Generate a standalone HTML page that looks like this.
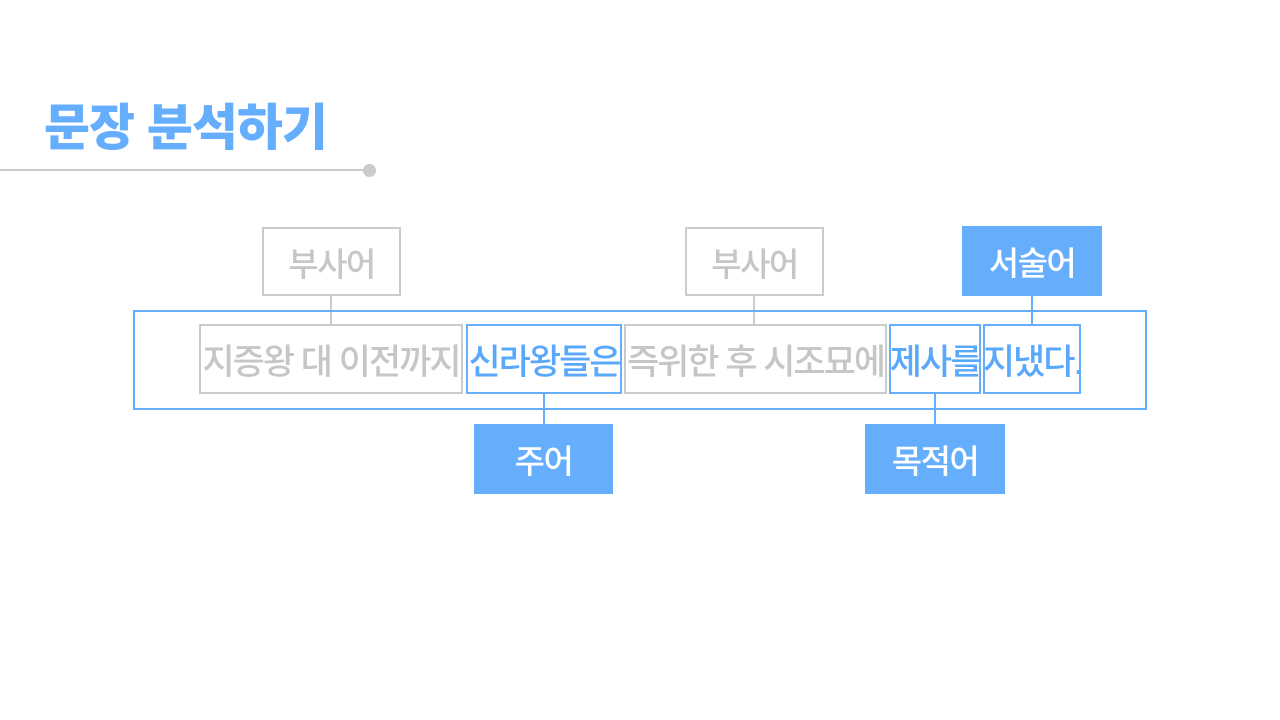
<!DOCTYPE html>
<html><head><meta charset="utf-8"><style>
body{margin:0;width:1280px;height:720px;background:#fff;position:relative;overflow:hidden;font-family:"Liberation Sans","Noto Sans CJK KR",sans-serif}
.a{position:absolute;box-sizing:border-box;display:flex;align-items:center;justify-content:center;white-space:nowrap}
.g{border:2px solid #cbcbcb;color:#c6c6c6}
.b{border:2px solid #64aefd;color:#5aa8fb}
.f{background:#64aefd;color:#fff}
.t{font-size:35px;letter-spacing:-2px;font-weight:500}
.l{font-size:33px;letter-spacing:-1.5px;font-weight:500}
.v{position:absolute;width:2px}
</style></head><body>
<div style="position:absolute;left:44px;top:88px;font-size:50px;font-weight:900;color:#64aefd;letter-spacing:-1px">문장 분석하기</div>
<div style="position:absolute;left:0;top:169px;width:370px;height:2px;background:#cbcbcb"></div>
<div style="position:absolute;left:363px;top:164px;width:13px;height:13px;border-radius:50%;background:#cbcbcb"></div>

<div class="a g l" style="left:262px;top:227px;width:139px;height:69px">부사어</div>
<div class="a g l" style="left:685px;top:227px;width:139px;height:69px">부사어</div>
<div class="a f l" style="left:962px;top:226px;width:140px;height:70px">서술어</div>

<div class="v" style="left:330px;top:295px;height:31px;background:#cbcbcb"></div>
<div class="v" style="left:753px;top:295px;height:31px;background:#cbcbcb"></div>
<div class="v" style="left:1031px;top:295px;height:31px;background:#64aefd"></div>

<div class="a" style="left:133px;top:310px;width:1014px;height:100px;border:2px solid #64aefd"></div>

<div class="a g t" style="left:199px;top:324px;width:264px;height:70px">지증왕 대 이전까지</div>
<div class="a b t" style="left:466px;top:324px;width:156px;height:70px">신라왕들은</div>
<div class="a g t" style="left:624px;top:324px;width:263px;height:70px">즉위한 후 시조묘에</div>
<div class="a b t" style="left:889px;top:324px;width:92px;height:70px">제사를</div>
<div class="a b t" style="left:983px;top:324px;width:98px;height:70px">지냈다.</div>

<div class="v" style="left:543px;top:393px;height:31px;background:#64aefd"></div>
<div class="v" style="left:934px;top:393px;height:31px;background:#64aefd"></div>

<div class="a f l" style="left:474px;top:424px;width:139px;height:70px">주어</div>
<div class="a f l" style="left:865px;top:424px;width:140px;height:70px">목적어</div>
</body></html>
